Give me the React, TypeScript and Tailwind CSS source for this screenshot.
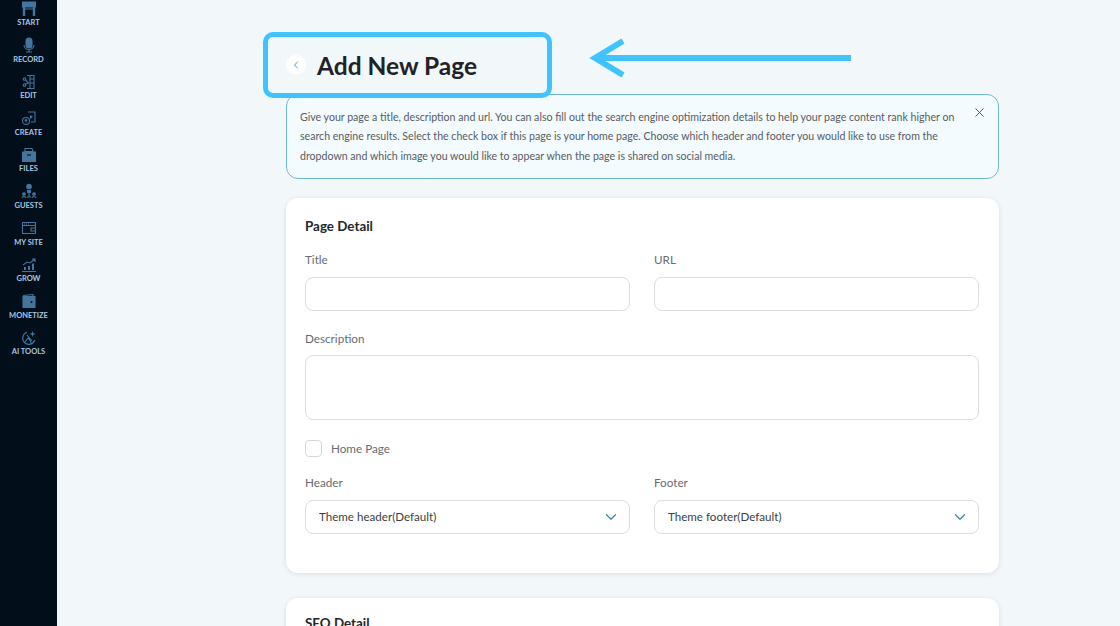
import React from 'react';
import { ChevronDown, ChevronLeft, X } from 'lucide-react';

const iconProps = { viewBox: '0 0 16 16', className: 'w-[16px] h-[16px]', fill: 'none', stroke: '#44759c', strokeWidth: 1.1 };

const NAV: { label: string; icon: React.ReactNode }[] = [
  {
    label: 'START',
    icon: (
      <svg {...iconProps}>
        <path d="M1.500 1h13v5h-13z" fill="#44759c" />
        <path d="M3 6v9M13 6v9" strokeWidth="2.400" />
        <path d="M4 8h8" />
      </svg>
    ),
  },
  {
    label: 'RECORD',
    icon: (
      <svg {...iconProps}>
        <rect x="5" y="1" width="6" height="10" rx="3" fill="#44759c" />
        <path d="M3 8c0 6 10 6 10 0M8 12v3M5 15h6" />
      </svg>
    ),
  },
  {
    label: 'EDIT',
    icon: (
      <svg {...iconProps}>
        <path d="M6 1.500h7v13H6M9 1.500v13M9 5h4M9 9h4" />
        <circle cx="3.500" cy="5" r="1.300" />
        <circle cx="3.500" cy="11" r="1.300" />
        <path d="M4.500 6l3 3-3 1" />
      </svg>
    ),
  },
  {
    label: 'CREATE',
    icon: (
      <svg {...iconProps}>
        <path d="M7 2h7v10h-4" />
        <path d="M9 5l3 2-3 2z" fill="#44759c" stroke="none" />
        <circle cx="5" cy="11" r="3.500" />
        <path d="M5 9.500v3M3.700 10.700L5 9.500l1.300 1.200" />
      </svg>
    ),
  },
  {
    label: 'FILES',
    icon: (
      <svg {...iconProps}>
        <path d="M4 1.500h7l1 3H4z" />
        <path d="M1.500 5h13v9.500h-13z" fill="#44759c" />
        <path d="M6 8h4" stroke="#020e1a" />
      </svg>
    ),
  },
  {
    label: 'GUESTS',
    icon: (
      <svg {...iconProps}>
        <circle cx="8" cy="3.500" r="2.300" fill="#44759c" />
        <path d="M6 7h4v3H6z" fill="#44759c" stroke="none" />
        <circle cx="3" cy="11" r="1.300" fill="#44759c" />
        <circle cx="13" cy="11" r="1.300" fill="#44759c" />
        <path d="M1 15c0-2 4-2 4 0M11 15c0-2 4-2 4 0M6 14h4M8 10v4" />
      </svg>
    ),
  },
  {
    label: 'MY SITE',
    icon: (
      <svg {...iconProps}>
        <path d="M1.500 2.500h13v11h-13zM1.500 5.500h13" />
        <path d="M10 8h4.500v3H10z" />
        <path d="M3 4h1M5 4h1M7 4h1" />
      </svg>
    ),
  },
  {
    label: 'GROW',
    icon: (
      <svg {...iconProps}>
        <path d="M2 8l4-3 3 1 5-4M11 2h3v3" />
        <path d="M1 14.500h14" />
        <path d="M3 10h2v3H3zM7 9h2v4H7zM11 6.500h2V13h-2z" fill="#44759c" stroke="none" />
      </svg>
    ),
  },
  {
    label: 'MONETIZE',
    icon: (
      <svg {...iconProps}>
        <path d="M2 2.500l10-1v3" />
        <path d="M2 3.500h12v11H2z" fill="#44759c" />
        <circle cx="10.500" cy="9" r="1" fill="#020e1a" stroke="none" />
      </svg>
    ),
  },
  {
    label: 'AI TOOLS',
    icon: (
      <svg {...iconProps}>
        <path d="M6 2.200a6.200 6.200 0 1 0 7.800 7.800" />
        <path d="M11.500 1l.8 2.200 2.200.8-2.200.8-.8 2.200-.8-2.200-2.200-.8 2.200-.8z" fill="#44759c" stroke="none" />
        <path d="M4 12l3-4 2 2 1 3M6 5l5 6" />
      </svg>
    ),
  },
];

const inputBox = 'w-full bg-white border border-[#d9dee3] rounded-lg';

const Field = ({ label, tight, children }: { label: string; tight?: boolean; children: React.ReactNode }) => (
  <div>
    <div className={`text-[11.7px] leading-[18px] text-[#666c72] ${tight ? 'mb-[8px]' : 'mb-[9px]'}`}>{label}</div>
    {children}
  </div>
);

const Select = ({ value }: { value: string }) => (
  <div className={`${inputBox} h-[34px] pl-[13px] pr-[9px] flex items-center justify-between`}>
    <span className="text-[11.6px] text-[#3a3f44]">{value}</span>
    <ChevronDown className="w-[18px] h-[18px] text-[#3d84a3]" strokeWidth={1.6} />
  </div>
);

export default function App() {
  return (
    <div className="relative flex h-[626px] w-[1120px] overflow-hidden bg-[#f2f7fa]" style={{ fontFamily: '"Lato", "Noto Sans", sans-serif' }}>
      {/* Sidebar */}
      <aside className="w-[57px] shrink-0 bg-[#020e1a] -mt-[0.5px]">
        {NAV.map((item) => (
          <div key={item.label} className="h-[36.6px] flex flex-col items-center justify-start">
            <div className="h-[17px] flex items-end">{item.icon}</div>
            <div className="text-[7.5px] leading-[11px] mt-[0.5px] font-bold text-[#a8c8e2] whitespace-nowrap">{item.label}</div>
          </div>
        ))}
      </aside>

      {/* Main */}
      <main className="ml-[229px] w-[713px] shrink-0">
        <div className="h-[94px] pt-[49px] flex items-start gap-[11px]">
          <div className="w-[20px] h-[20px] mt-[6px] rounded-full bg-white flex items-center justify-center">
            <ChevronLeft className="w-[12px] h-[12px] text-[#4f9cb5]" strokeWidth={2} />
          </div>
          <h1 className="text-[24.5px] leading-[32px] pt-[1px] font-bold text-[#1f2328]">Add New Page</h1>
        </div>

        <div className="relative h-[85px] rounded-xl border border-[#6db8ca] bg-[#f3fbff] pl-[13px] pt-[12.5px] pr-[36px]">
          <p className="text-[10.6px] leading-[19.6px] text-[#575c61]">
            Give your page a title, description and url. You can also fill out the search engine optimization details to help your page content rank higher on search engine results. Select the check box if this page is your home page. Choose which header and footer you would like to use from the dropdown and which image you would like to appear when the page is shared on social media.
          </p>
          <X className="absolute top-[10px] right-[11px] w-[15px] h-[15px] text-[#4d5358]" strokeWidth={1.5} />
        </div>

        <section className="mt-[19px] h-[375px] bg-white rounded-xl shadow-[0_1px_5px_rgba(30,50,70,0.12)] pl-[19px] pr-[20px] pt-[18px]">
          <h2 className="text-[13.4px] leading-[20px] font-bold text-[#22262a] mb-[14px]">Page Detail</h2>
          <div className="grid grid-cols-2 gap-x-[24px]">
            <Field label="Title"><div className={`${inputBox} h-[34px]`} /></Field>
            <Field label="URL"><div className={`${inputBox} h-[34px]`} /></Field>
          </div>
          <div className="mt-[18px]">
            <Field label="Description" tight><div className={`${inputBox} h-[65px]`} /></Field>
          </div>
          <label className="mt-[20px] flex items-center gap-[9px]">
            <span className="w-[17px] h-[17px] rounded-[4px] border border-[#d3d8dd] bg-white" />
            <span className="text-[11.7px] leading-[17px] text-[#666c72]">Home Page</span>
          </label>
          <div className="mt-[16px] grid grid-cols-2 gap-x-[24px]">
            <Field label="Header"><Select value="Theme header(Default)" /></Field>
            <Field label="Footer"><Select value="Theme footer(Default)" /></Field>
          </div>
        </section>

        <section className="mt-[25px] h-[200px] bg-white rounded-xl shadow-[0_1px_5px_rgba(30,50,70,0.12)] px-[19px] pt-[15px]">
          <h2 className="text-[13.4px] leading-[20px] font-bold text-[#22262a]">SEO Detail</h2>
        </section>
      </main>

      {/* Annotation overlay */}
      <div className="absolute left-[263px] top-[32px] w-[289px] h-[66px] rounded-[10px] border-[5px] border-[#40c4ff]" />
      <svg className="absolute left-[585px] top-[35px]" width="270" height="46" viewBox="0 0 270 46" fill="none" stroke="#40c4ff" strokeWidth="6">
        <path d="M266 23H12" />
        <path d="M38 6L10 23l28 17" />
      </svg>
    </div>
  );
}
